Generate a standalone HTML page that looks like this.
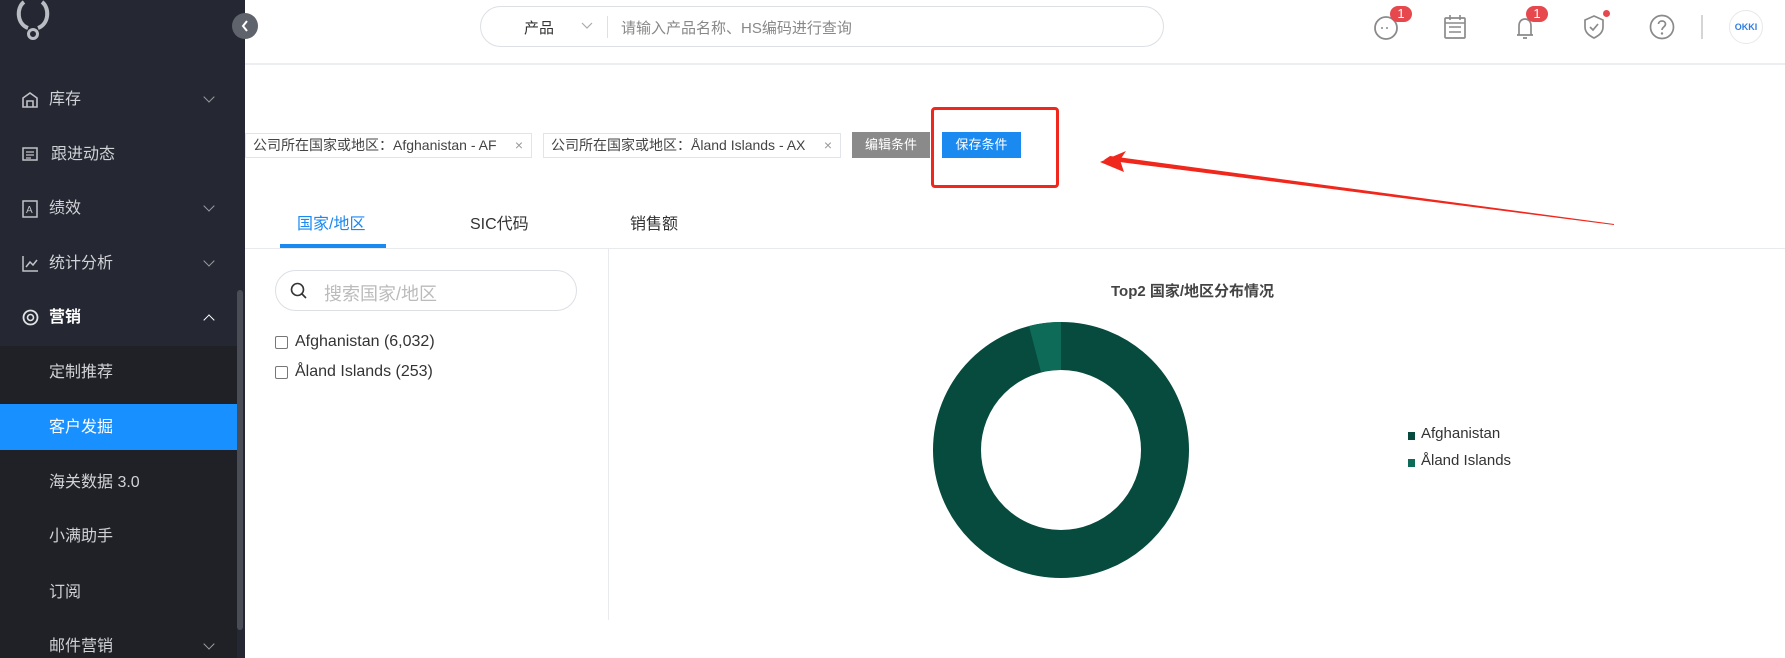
<!DOCTYPE html>
<html><head><meta charset="utf-8"><style>
*{margin:0;padding:0;box-sizing:border-box}
body{width:1785px;height:658px;position:relative;overflow:hidden;background:#fff;font-family:"Liberation Sans","Noto Sans CJK SC",sans-serif;}
.a{position:absolute;white-space:nowrap}
#side{position:absolute;left:0;top:0;width:245px;height:658px;background:#252832}
#sub{position:absolute;left:0;top:346px;width:237px;height:312px;background:#1f2127}
.mi{position:absolute;left:49px;color:#d0d2d6;font-size:16px;line-height:20px}
.chev{position:absolute;left:205px;width:8px;height:8px;border-right:1.5px solid #9a9ca2;border-bottom:1.5px solid #9a9ca2;transform:rotate(45deg)}
.tag{position:absolute;top:133px;height:25px;border:1px solid #e1e4ea;font-size:14px;color:#444;line-height:23px;padding-left:7px}
.tag span{position:absolute;right:8px;color:#999}
.ic{position:absolute;top:14px}
</style></head><body>
<div id="side"></div>
<div id="sub"></div>
<div class="a" style="left:0;top:404px;width:237px;height:46px;background:#1890ff"></div>
<div class="a" style="left:237px;top:290px;width:6px;height:340px;border-radius:3px;background:#4a4d55"></div>
<svg class="a" style="left:12px;top:0" width="40" height="42"><path d="M16 28 C5 24 4 8 12 2 M30 2 C38 8 37 24 26 28" stroke="#b9bcc2" stroke-width="4" fill="none"/><circle cx="21" cy="34" r="4.5" stroke="#b9bcc2" stroke-width="3" fill="none"/></svg>
<div class="a" style="left:232px;top:13px;width:26px;height:26px;border-radius:13px;background:#5f636b"></div>
<svg class="a" style="left:240px;top:19px" width="10" height="14"><path d="M7 2 L3 7 L7 12" stroke="#fff" stroke-width="2" fill="none"/></svg>
<svg class="a" style="left:22px;top:92px" width="16" height="16"><path d="M1 15 V6 L8 1 L15 6 V15 Z M5 15 V9 H11 V15" stroke="#c0c2c6" stroke-width="1.6" fill="none"/></svg>
<div class="mi" style="top:90px">库存</div><div class="chev" style="top:93px"></div>
<svg class="a" style="left:22px;top:147px" width="16" height="14"><rect x="1" y="1" width="14" height="12" stroke="#c0c2c6" stroke-width="1.5" fill="none"/><path d="M4 5H12M4 8H12M4 11H9" stroke="#c0c2c6" stroke-width="1.3"/></svg>
<div class="mi" style="top:145px;left:51px">跟进动态</div>
<svg class="a" style="left:22px;top:200px" width="16" height="18"><rect x="1" y="1" width="14" height="16" stroke="#c0c2c6" stroke-width="1.5" fill="none"/><text x="4" y="13" font-size="10" fill="#c0c2c6" font-family="Liberation Sans">A</text></svg>
<div class="mi" style="top:199px">绩效</div><div class="chev" style="top:202px"></div>
<svg class="a" style="left:22px;top:255px" width="17" height="17"><path d="M1 1V16H16 M4 12 L8 7 L11 10 L15 5" stroke="#c0c2c6" stroke-width="1.5" fill="none"/></svg>
<div class="mi" style="top:254px">统计分析</div><div class="chev" style="top:257px"></div>
<svg class="a" style="left:22px;top:309px" width="17" height="17"><circle cx="8.5" cy="8.5" r="7" stroke="#e0e2e6" stroke-width="1.8" fill="none"/><circle cx="8.5" cy="8.5" r="3" stroke="#e0e2e6" stroke-width="1.6" fill="none"/></svg>
<div class="mi" style="top:308px;color:#fff;font-weight:bold">营销</div><div class="chev" style="top:316px;transform:rotate(-135deg);border-color:#fff"></div>
<div class="mi" style="top:363px">定制推荐</div>
<div class="mi" style="top:418px;color:#fff">客户发掘</div>
<div class="mi" style="top:473px">海关数据 3.0</div>
<div class="mi" style="top:527px">小满助手</div>
<div class="mi" style="top:583px">订阅</div>
<div class="mi" style="top:637px">邮件营销</div><div class="chev" style="top:640px"></div>
<div class="a" style="left:245px;top:63px;width:1540px;height:2px;background:#eceef1"></div>
<div class="a" style="left:480px;top:6px;width:684px;height:41px;border:1px solid #dcdfe4;border-radius:21px"></div>
<div class="a" style="left:524px;top:17px;font-size:15px;color:#333">产品</div>
<svg class="a" style="left:581px;top:22px" width="12" height="8"><path d="M1 1L6 6L11 1" stroke="#aaa" stroke-width="1.2" fill="none"/></svg>
<div class="a" style="left:607px;top:16px;width:1px;height:22px;background:#e0e0e0"></div>
<div class="a" style="left:621px;top:17px;font-size:15px;color:#888">请输入产品名称、HS编码进行查询</div>
<svg class="a" style="left:1372px;top:12px" width="28" height="28"><circle cx="14" cy="16" r="11" stroke="#8a8a8a" stroke-width="1.8" fill="none"/><path d="M10 15v2M15 15v2" stroke="#888" stroke-width="1.5"/></svg>
<div class="a" style="left:1390px;top:6px;width:22px;height:16px;border-radius:8px;background:#e6484d;color:#fff;font-size:13px;text-align:center;line-height:16px">1</div>
<svg class="ic a" style="left:1443px" width="24" height="26"><rect x="2" y="4" width="20" height="20" rx="1" stroke="#8a8a8a" stroke-width="1.7" fill="none"/><path d="M7 1V6M17 1V6M6 13H18M6 18H18M2 9H22" stroke="#8a8a8a" stroke-width="1.6"/></svg>
<svg class="ic a" style="left:1513px" width="24" height="26"><path d="M4 21H20 M6 21V12C6 7 9 5 12 5C15 5 18 7 18 12V21 M10 24H14" stroke="#8a8a8a" stroke-width="1.7" fill="none"/></svg>
<div class="a" style="left:1526px;top:6px;width:22px;height:16px;border-radius:8px;background:#e6484d;color:#fff;font-size:13px;text-align:center;line-height:16px">1</div>
<svg class="ic a" style="left:1582px" width="24" height="26"><path d="M12 2L21 6V13C21 19 16 22 12 24C8 22 3 19 3 13V6Z M8 13L11 16L16 10" stroke="#8a8a8a" stroke-width="1.7" fill="none"/></svg>
<div class="a" style="left:1603px;top:10px;width:7px;height:7px;border-radius:4px;background:#e6484d"></div>
<svg class="ic a" style="left:1649px" width="26" height="26"><circle cx="13" cy="13" r="11.5" stroke="#8a8a8a" stroke-width="1.7" fill="none"/><path d="M9.5 10C9.5 6 16.5 6 16.5 10C16.5 13 13 13 13 16" stroke="#8a8a8a" stroke-width="1.7" fill="none"/><circle cx="13" cy="19.5" r="1.2" fill="#8a8a8a"/></svg>
<div class="a" style="left:1701px;top:15px;width:2px;height:24px;background:#d5d5d5"></div>
<div class="a" style="left:1729px;top:10px;width:34px;height:34px;border-radius:17px;border:1px solid #e8e8e8;color:#2f7de1;font-size:9px;font-weight:bold;text-align:center;line-height:32px">OKKI</div>
<div class="tag" style="left:245px;width:287px">公司所在国家或地区：Afghanistan - AF<span>×</span></div>
<div class="tag" style="left:543px;width:298px">公司所在国家或地区：Åland Islands - AX<span>×</span></div>
<div class="a" style="left:852px;top:132px;width:78px;height:26px;background:#8a8a8a;color:#fff;font-size:13px;text-align:center;line-height:26px">编辑条件</div>
<div class="a" style="left:942px;top:132px;width:79px;height:26px;background:#1a89f0;color:#fff;font-size:13px;text-align:center;line-height:26px">保存条件</div>
<div class="a" style="left:931px;top:107px;width:128px;height:81px;border:3px solid #f0271c;border-radius:4px"></div>
<svg class="a" style="left:1090px;top:150px" width="540" height="80"><path d="M14 10 L524 75 L524 74 L20 6 Z" fill="#f0271c"/><path d="M10 12 L36 1 L30 10 L34 22 Z" fill="#f0271c"/></svg>
<div class="a" style="left:297px;top:210px;font-size:16px;color:#1a89f0">国家/地区</div>
<div class="a" style="left:280px;top:244px;width:106px;height:4px;background:#1a89f0"></div>
<div class="a" style="left:470px;top:210px;font-size:16px;color:#333">SIC代码</div>
<div class="a" style="left:630px;top:210px;font-size:16px;color:#333">销售额</div>
<div class="a" style="left:245px;top:248px;width:1540px;height:1px;background:#e8eaee"></div>
<div class="a" style="left:608px;top:249px;width:1px;height:371px;background:#e8eaee"></div>
<div class="a" style="left:275px;top:270px;width:302px;height:41px;border:1px solid #dcdfe4;border-radius:21px"></div>
<svg class="a" style="left:290px;top:282px" width="18" height="18"><circle cx="7.5" cy="7.5" r="6" stroke="#333" stroke-width="1.6" fill="none"/><path d="M12 12L16 16" stroke="#333" stroke-width="1.6"/></svg>
<div class="a" style="left:324px;top:280px;font-size:18px;color:#bbb">搜索国家/地区</div>
<div class="a" style="left:275px;top:336px;width:13px;height:13px;border:1.5px solid #777;border-radius:2px"></div>
<div class="a" style="left:295px;top:333px;font-size:16px;color:#333">Afghanistan (6,032)</div>
<div class="a" style="left:275px;top:366px;width:13px;height:13px;border:1.5px solid #777;border-radius:2px"></div>
<div class="a" style="left:295px;top:363px;font-size:16px;color:#333">Åland Islands (253)</div>
<div class="a" style="left:1111px;top:280px;font-size:15px;font-weight:bold;color:#444">Top2 国家/地区分布情况</div>
<svg class="a" style="left:931px;top:320px" width="260" height="260"><circle cx="130" cy="130" r="104" stroke="#064b3d" stroke-width="48" fill="none"/><path d="M130 2 A128 128 0 0 0 98 6 L110 52 A80 80 0 0 1 130 50 Z" fill="#0e6b58"/></svg>
<div class="a" style="left:1408px;top:432px;width:7px;height:8px;background:#064b3d"></div>
<div class="a" style="left:1421px;top:425px;font-size:15px;color:#333">Afghanistan</div>
<div class="a" style="left:1408px;top:459px;width:7px;height:8px;background:#0e6b58"></div>
<div class="a" style="left:1421px;top:452px;font-size:15px;color:#333">Åland Islands</div>
</body></html>
